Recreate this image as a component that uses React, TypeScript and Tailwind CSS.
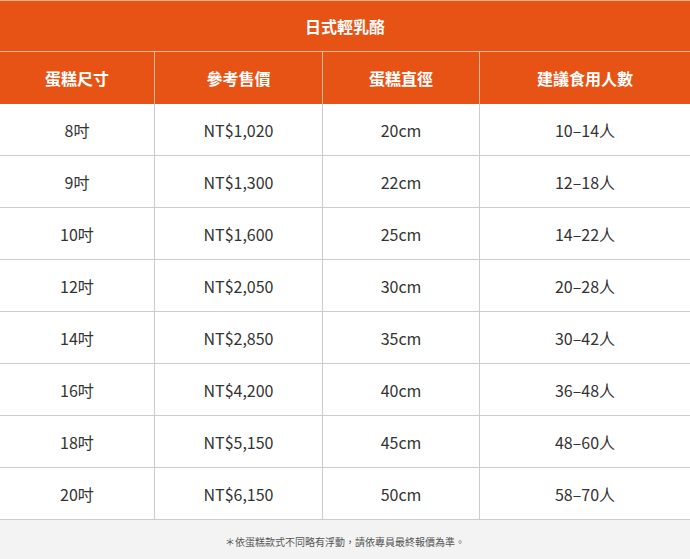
import React from "react";

const rows = [
  ["8吋", "NT$1,020", "20cm", "10–14人"],
  ["9吋", "NT$1,300", "22cm", "12–18人"],
  ["10吋", "NT$1,600", "25cm", "14–22人"],
  ["12吋", "NT$2,050", "30cm", "20–28人"],
  ["14吋", "NT$2,850", "35cm", "30–42人"],
  ["16吋", "NT$4,200", "40cm", "36–48人"],
  ["18吋", "NT$5,150", "45cm", "48–60人"],
  ["20吋", "NT$6,150", "50cm", "58–70人"],
];

const heads = ["蛋糕尺寸", "參考售價", "蛋糕直徑", "建議食用人數"];
const cols = "grid grid-cols-[155px_168px_157px_210px]";

export default function App() {
  return (
    <div
      className="w-[690px] h-[559px] bg-white overflow-hidden"
      style={{ fontFamily: '"Noto Sans CJK TC", "Noto Sans", sans-serif' }}
    >
      <div className="h-[52px] bg-[#e65314] border-t border-t-[#f2b08a] border-b border-b-[#f0b896] flex items-center justify-center text-white font-bold text-[16px]">
        日式輕乳酪
      </div>
      <div className={`${cols} h-[52px] bg-[#e65314]`}>
        {heads.map((h, i) => (
          <div
            key={h}
            className={`flex items-center justify-center text-white font-bold text-[16px] ${i < 3 ? "border-r border-r-[#f0b896]" : ""}`}
          >
            {h}
          </div>
        ))}
      </div>
      {rows.map((r, ri) => (
        <div key={ri} className={`${cols} h-[52px] border-b border-b-[#cccccc]`}>
          {r.map((c, i) => (
            <div
              key={i}
              className={`flex items-center justify-center text-[16px] text-[#333333] ${i < 3 ? "border-r border-r-[#cccccc]" : ""}`}
            >
              {c}
            </div>
          ))}
        </div>
      ))}
      <div className="h-[40px] bg-[#f3f3f3] flex items-center justify-center pt-[3px] text-[10px] text-[#555555]">
        ＊依蛋糕款式不同略有浮動，請依專員最終報價為準。
      </div>
    </div>
  );
}
